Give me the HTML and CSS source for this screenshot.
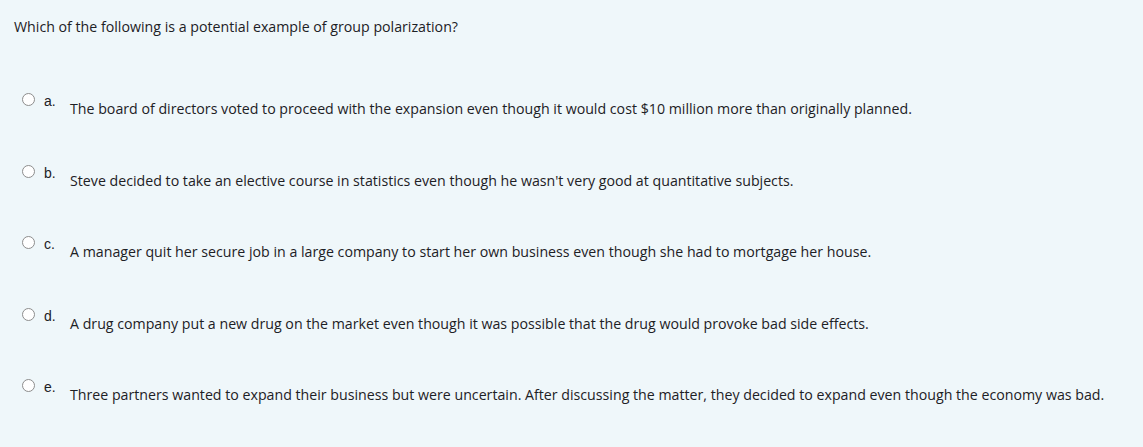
FILE: index.html
```html
<!DOCTYPE html>
<html>
<head>
<meta charset="utf-8">
<link rel="stylesheet" href="styles.css">
</head>
<body>
<div class="que">
  <div class="qtext">Which of the following is a potential example of group polarization?</div>
  <div class="answers">
    <div class="opt"><span class="radio"></span><span class="lab">a.</span><span class="txt">The board of directors voted to proceed with the expansion even though it would cost $10 million more than originally planned.</span></div>
    <div class="opt"><span class="radio"></span><span class="lab">b.</span><span class="txt">Steve decided to take an elective course in statistics even though he wasn't very good at quantitative subjects.</span></div>
    <div class="opt"><span class="radio"></span><span class="lab">c.</span><span class="txt">A manager quit her secure job in a large company to start her own business even though she had to mortgage her house.</span></div>
    <div class="opt"><span class="radio"></span><span class="lab">d.</span><span class="txt">A drug company put a new drug on the market even though it was possible that the drug would provoke bad side effects.</span></div>
    <div class="opt"><span class="radio"></span><span class="lab">e.</span><span class="txt">Three partners wanted to expand their business but were uncertain. After discussing the matter, they decided to expand even though the economy was bad.</span></div>
  </div>
</div>
</body>
</html>
```
FILE: styles.css
```css
html, body {
  margin: 0;
  padding: 0;
  background: #eff7fa;
}
body {
  width: 1143px;
  height: 447px;
  overflow: hidden;
  font-family: "Open Sans", "Noto Sans", sans-serif;
  font-size: 14.2px;
  color: #1d2125;
}
.que {
  padding: 17px 0 0 14px;
}
.qtext {
  line-height: 20px;
}
.answers {
  display: flex;
  flex-direction: column;
  padding-top: 56px;
  padding-left: 8px;
}
.opt {
  display: flex;
  align-items: flex-start;
  height: 71.5px;
}
.radio {
  width: 11px;
  height: 11px;
  border: 1px solid #8d8d8d;
  border-radius: 50%;
  background: #fff;
  flex: none;
}
.lab {
  font-family: "Liberation Sans", Arial, sans-serif;
  font-size: 14px;
  line-height: 14px;
  margin-top: 1px;
  margin-left: 9px;
  width: 26px;
  flex: none;
}
.txt {
  margin-top: 6px;
  line-height: 20px;
}
```
